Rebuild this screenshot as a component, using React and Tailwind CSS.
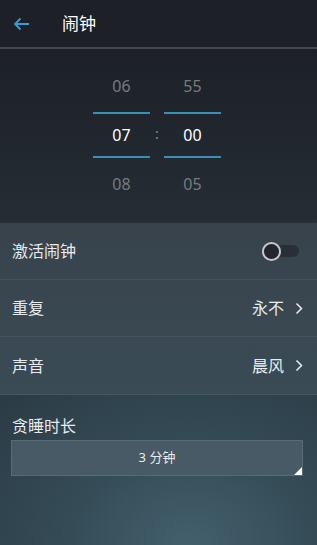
import React from "react";

const font = { fontFamily: '"Noto Sans", "Noto Sans CJK SC", sans-serif' };

function Row({ label, value, children, last }) {
  return (
    <div className={`flex h-[57px] items-center justify-between pl-3 pr-[14px] ${last ? "" : "border-b border-[#44525b]"}`}>
      <span className="text-[16px] text-[#e8ecee]">{label}</span>
      {children ? children : (
        <div className="flex items-center gap-[11px] text-[#e8ecee]">
          <span className="text-[16px]">{value}</span>
          <svg width="8" height="13" viewBox="0 0 8 13" fill="none">
            <path d="M1.5 1.5 L6.5 6.5 L1.5 11.5" stroke="#e8ecee" strokeWidth="1.5" />
          </svg>
        </div>
      )}
    </div>
  );
}

export default function App() {
  return (
    <div className="w-[317px] h-[545px] overflow-hidden flex flex-col bg-[#1e2027]" style={font}>
      {/* Header */}
      <div className="h-[47px] flex items-center bg-[#1e2028] shrink-0">
        <svg className="ml-[13px]" width="17" height="14" viewBox="0 0 17 14" fill="none">
          <path d="M16 7 H2 M7.5 1.5 L2 7 L7.5 12.5" stroke="#3b9bd2" strokeWidth="1.8" />
        </svg>
        <span className="ml-[32px] text-[17px] text-white">闹钟</span>
      </div>
      <div className="h-[2px] bg-[#45484f] shrink-0" />
      {/* Time picker */}
      <div className="h-[173px] shrink-0 bg-gradient-to-b from-[#1d2027] to-[#252d35] flex justify-center pt-[25px] pr-[3px]">
        <div className="flex items-start">
          <div className="w-[57px] flex flex-col items-center">
            <div className="h-[24px] text-[16px] text-[#767b80] leading-[24px]">06</div>
            <div className="mt-[14px] h-[2px] w-full bg-[#3a8fb4]" />
            <div className="h-[42px] text-[16px] text-white leading-[42px]">07</div>
            <div className="h-[2px] w-full bg-[#3a8fb4]" />
            <div className="mt-[14px] h-[24px] text-[16px] text-[#767b80] leading-[24px]">08</div>
          </div>
          <div className="w-[14px] text-center text-[#8a9096] text-[14px] mt-[49px]">:</div>
          <div className="w-[57px] flex flex-col items-center">
            <div className="h-[24px] text-[16px] text-[#767b80] leading-[24px]">55</div>
            <div className="mt-[14px] h-[2px] w-full bg-[#3a8fb4]" />
            <div className="h-[42px] text-[16px] text-white leading-[42px]">00</div>
            <div className="h-[2px] w-full bg-[#3a8fb4]" />
            <div className="mt-[14px] h-[24px] text-[16px] text-[#767b80] leading-[24px]">05</div>
          </div>
        </div>
      </div>
      {/* Settings */}
      <div className="shrink-0 bg-gradient-to-b from-[#38434c] to-[#3a4b55] border-t border-[#2c353d]">
        <Row label="激活闹钟">
          <div className="relative w-[37px] h-[18px] mr-[4px]">
            <div className="absolute left-[6px] right-0 top-[3px] h-[12px] rounded-full bg-[#2a2e36]" />
            <div className="absolute left-0 top-0 w-[19px] h-[19px] rounded-full bg-[#232530] border-2 border-[#c6c9cc]" />
          </div>
        </Row>
        <Row label="重复" value="永不" />
        <Row label="声音" value="晨风" last />
      </div>
      {/* Snooze */}
      <div className="flex-1 bg-[radial-gradient(ellipse_at_60%_100%,#42606c_0%,#344a55_50%,#2b3b45_100%)] border-t border-[#465660] pt-[21px]">
        <div className="pl-3 text-[16px] leading-[20px] text-[#e8ecee]">贪睡时长</div>
        <div className="relative mx-[11px] mt-[4px] w-[292px] h-[36px] bg-[#475a65] border border-[#5a6b75] flex items-center justify-center">
          <span className="text-[13px] text-[#e8ecee]">3 分钟</span>
          <div className="absolute right-0 bottom-0 w-0 h-0 border-l-[8px] border-l-transparent border-b-[8px] border-b-white" />
        </div>
      </div>
    </div>
  );
}
